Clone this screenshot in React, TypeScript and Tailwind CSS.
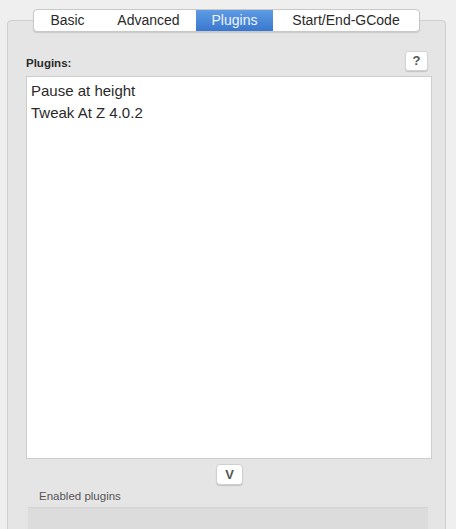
import React from "react";

export default function App() {
  const tabs = [
    { label: "Basic", w: "w-[67px]" },
    { label: "Advanced", w: "w-[95px]" },
    { label: "Plugins", w: "w-[77px]", active: true },
    { label: "Start/End-GCode", w: "w-[146px]" },
  ];
  return (
    <div
      className="w-[456px] h-[529px] overflow-hidden bg-[#efefef] pt-[20px] pl-[7px] pr-[10px]"
      style={{ fontFamily: '"Liberation Sans", Arial, sans-serif' }}
    >
      <div className="h-[540px] bg-[#e5e5e5] border border-[#cfcfcf] rounded-[4px] flex flex-col">
        <div className="flex justify-center -mt-[12px]">
          <div className="flex h-[23px] bg-white border border-[#c8c8c8] rounded-[4px] shadow-[0_1px_1px_rgba(0,0,0,0.12)] overflow-hidden">
            {tabs.map((t) => (
              <div
                key={t.label}
                className={`${t.w} flex items-center justify-center text-[14px] ${
                  t.active
                    ? "bg-gradient-to-b from-[#5d9be3] to-[#3a78d0] text-[#eef4fc]"
                    : "text-[#2a2a2a]"
                }`}
              >
                {t.label}
              </div>
            ))}
          </div>
        </div>
        <div className="flex items-end justify-between pl-[18px] pr-[17px] mt-[19px]">
          <span className="text-[11.5px] font-bold text-[#2a2a2a] mb-[4px]">Plugins:</span>
          <div className="w-[23px] h-[20px] mb-[5px] bg-white border border-[#d4d4d4] rounded-[3px] shadow-[0_1px_1px_rgba(0,0,0,0.15)] flex items-center justify-center text-[13px] font-bold text-[#555]">
            ?
          </div>
        </div>
        <div className="ml-[18px] mr-[13px] h-[383px] bg-white border border-[#cdcdcd] pt-[3px] pl-[4px] text-[15px] leading-[22px] text-[#2a2a2a]">
          <div>Pause at height</div>
          <div>Tweak At Z 4.0.2</div>
        </div>
        <div className="flex justify-center mt-[5px] pl-[6px]">
          <div className="w-[27px] h-[21px] bg-white border border-[#d0d0d0] rounded-[4px] shadow-[0_1px_1px_rgba(0,0,0,0.15)] flex items-center justify-center text-[13px] font-bold text-[#555]">
            V
          </div>
        </div>
        <div className="pl-[31px] text-[11.5px] text-[#555] mt-[3px] leading-[16px]">Enabled plugins</div>
        <div className="ml-[20px] mr-[17px] mt-[3px] flex-1 bg-[#dcdcdc] border-t border-[#d2d2d2]" />
      </div>
    </div>
  );
}
